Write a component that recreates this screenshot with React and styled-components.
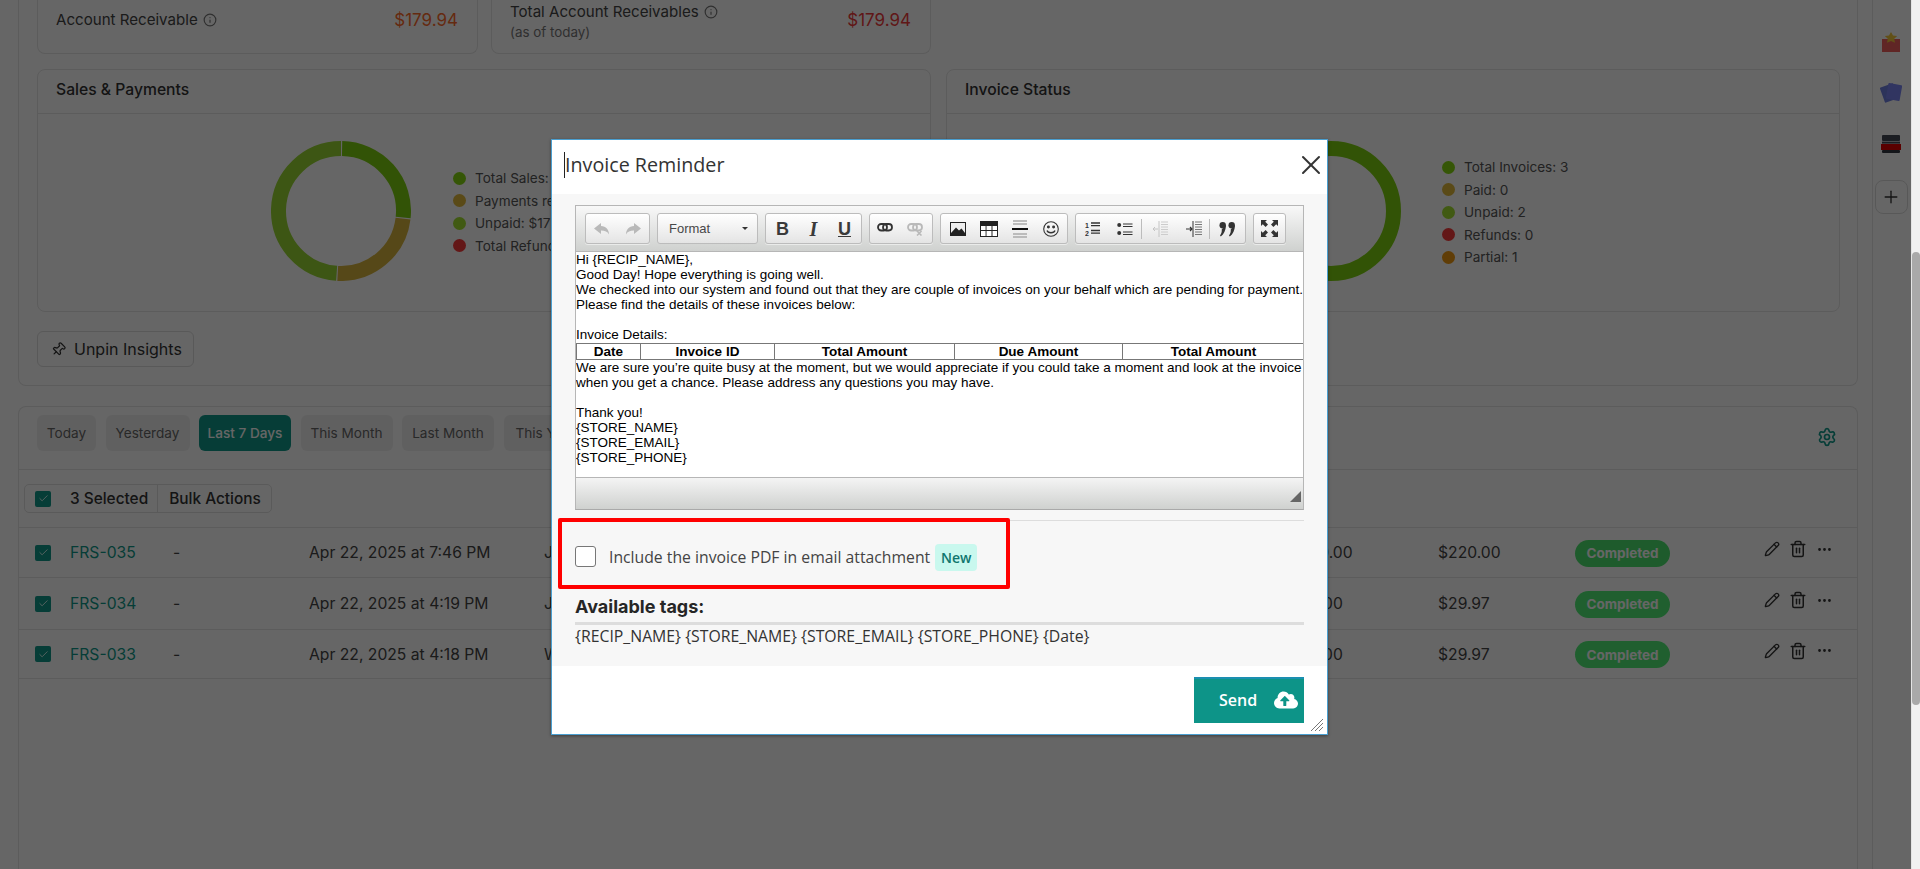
import React from "react";
import styled, { createGlobalStyle } from "styled-components";
import { Info, Pin, Settings, Pencil, Trash2, Ellipsis, Check, Plus, X } from "lucide-react";
import { FaCloudUploadAlt } from "react-icons/fa";

const Global = createGlobalStyle`
  html, body { margin: 0; padding: 0; height: 100%; overflow: hidden; background: #fff; }
  body { font-family: Inter, "Liberation Sans", sans-serif; color: #333; }
  * { box-sizing: border-box; }
`;

const Shell = styled.div`display: flex; width: 1920px; height: 869px;`;
const Main = styled.div`position: relative; flex: 1; display: flex; overflow: hidden; min-width: 0;`;
const Content = styled.div`width: 1872px; padding: 0 14px 0 18px; flex-shrink: 0;`;
const Rail = styled.aside`
  flex: 1; border-left: 1px solid #e6e6e6; display: flex; flex-direction: column; align-items: center;
  padding-top: 32px; padding-right: 2px;
`;
const RailIcon = styled.div`height: ${p => p.$h}px; display: flex; align-items: flex-start; justify-content: center;`;
const RailAdd = styled.div`
  width: 33px; height: 34px; border: 1px solid #ddd; border-radius: 8px; display: flex; align-items: center;
  justify-content: center; color: #333;
`;
const Scrollbar = styled.div`width: 9px; background: #f1f1f1; border-left: 1px solid #e4e4e4; padding-top: 252px;`;
const ScrollThumb = styled.div`height: 453px; background: #a9a9a9; border-radius: 5px;`;

const Insights = styled.section`
  border: 1px solid #e6e6e6; border-top: none; border-radius: 0 0 8px 8px; padding: 0 17px 18px 18px;
`;
const TopRow = styled.div`display: grid; grid-template-columns: 441px 440px; gap: 13px; margin-bottom: 15px; width: 894px;`;
const Stat = styled.div`
  height: 54px; border: 1px solid #e6e6e6; border-top: none; border-radius: 0 0 8px 8px;
  padding: 0 18px; display: flex; justify-content: space-between; align-items: flex-start;
`;
const StatLabel = styled.div`font-size: 15.1px; line-height: 20px; color: #444; padding-top: ${p => p.$top}px; display: flex; align-items: center; gap: 5px;`;
const StatSub = styled.div`font-size: 13.4px; line-height: 16px; color: #777; margin-top: 2px;`;
const StatValue = styled.div`font-size: 17px; line-height: 20px; color: ${p => p.$color}; padding-top: 10px; padding-right: 1px; font-weight: 400;`;

const Charts = styled.div`display: grid; grid-template-columns: 1fr 1fr; gap: 15px;`;
const ChartCard = styled.div`height: 243px; border: 1px solid #e6e6e6; border-radius: 8px;`;
const ChartHead = styled.div`
  height: 44px; border-bottom: 1px solid #e6e6e6; padding: 0 18px 4px; display: flex; align-items: center;
  font-size: 15.7px; font-weight: 500; color: #333;
`;
const ChartBody = styled.div`
  display: flex; align-items: flex-start; padding-top: 27px; padding-left: ${p => p.$left}px; gap: ${p => p.$gap}px;
`;
const Legend = styled.ul`
  list-style: none; margin: ${p => p.$top}px 0 0; padding: 0; display: flex; flex-direction: column; gap: 6px;
`;
const LegendItem = styled.li`display: flex; align-items: center; gap: 9px; font-size: 13.6px; line-height: 16.5px; color: #555;`;
const Dot = styled.span`width: 13px; height: 13px; border-radius: 50%; background: ${p => p.$c};`;
const UnpinButton = styled.button`
  margin-top: 19px; width: 157px; height: 36px; border: 1px solid #dedede; border-radius: 6px; background: transparent;
  display: flex; align-items: center; gap: 8px; padding: 0 0 0 13px; font: 400 16px Inter, sans-serif; color: #333;
`;

const Orders = styled.section`
  margin-top: 20px; border: 1px solid #e6e6e6; border-bottom: none; border-radius: 8px 8px 0 0; height: 465px;
`;
const TabBar = styled.div`
  height: 63px; border-bottom: 1px solid #e6e6e6; padding: 8px 20px 0 18px; display: flex; gap: 9.5px; align-items: flex-start;
`;
const Tab = styled.div`
  height: 36px; width: ${p => p.$w}px; flex-shrink: 0; border-radius: 6px; background: ${p => p.$on ? "#0f9a8a" : "#f1f1f1"};
  color: ${p => p.$on ? "#fff" : "#666"}; font-size: 13.6px; display: flex; align-items: center; justify-content: center;
  font-weight: ${p => p.$on ? 500 : 400};
`;
const Gear = styled.div`margin-left: auto; margin-top: 12px; color: #0f9a8a; display: flex;`;
const BulkRow = styled.div`height: 58px; padding: 14px 0 0 5px; border-bottom: 1px solid #e6e6e6; display: flex; align-items: flex-start;`;
const BulkBox = styled.div`height: 29px; display: flex; align-items: center; border: 1px solid #e2e2e2; border-radius: 5px; padding-left: 10px; font-size: 15.4px; font-weight: 500; color: #333;`;
const Check16 = styled.span`
  width: 16px; height: 16px; border-radius: 2px; background: #0f9a8a; color: #dffaf5; display: inline-flex; align-items: center; justify-content: center;
`;
const BulkText = styled.span`padding-left: 19px; padding-right: 9px; height: 100%; display: flex; align-items: center; border-right: 1px solid #e2e2e2;`;
const BulkAction = styled.span`padding: 0 10px 0 11px;`;
const Row = styled.div`
  height: ${p => p.$h}px; border-bottom: 1px solid #e6e6e6; padding-left: 16px; display: grid;
  grid-template-columns: 35px 103px 136px 235px 746px 148px 137px 189px 1fr; align-items: center; font-size: 15.7px; color: #444;
`;
const OrderId = styled.span`color: #0f9a8a;`;
const Badge = styled.span`
  width: 95px; height: 27px; border-radius: 14px; background: ${p => p.$c}; color: #fff; font-weight: 700; font-size: 13.5px;
  display: flex; align-items: center; justify-content: center; margin-top: 1px;
`;
const Actions = styled.div`display: flex; align-items: center; gap: 9px; color: #333; margin-top: -7px;`;

const Overlay = styled.div`position: absolute; inset: 0; background: rgba(0, 0, 0, 0.6);`;
const Modal = styled.div`
  position: absolute; left: 551px; top: 139px; width: 777px; height: 596px; background: #fff;
  border: 1px solid #4a9fd0; box-shadow: 0 1px 3px rgba(0,0,0,.4); display: flex; flex-direction: column;
`;
const ModalHead = styled.header`
  height: 54px; flex-shrink: 0; padding: 0 0 4px 12px; display: flex; align-items: center; justify-content: space-between;
`;
const ModalTitle = styled.h2`
  margin: 0; font: 400 19.7px/26px "Open Sans", "Noto Sans", sans-serif; color: #333; border-left: 1px solid #222;
`;
const CloseBtn = styled.span`display: flex; color: #333;`;
const ModalBody = styled.div`position: relative; background: #f7f7f7; height: 472px; flex-shrink: 0; padding: 11px 23px 0;`;
const Editor = styled.div`height: 305px; border: 1px solid #b6b6b6; border-bottom-color: #a9a9a9; display: flex; flex-direction: column; background: #fff;`;
const Toolbar = styled.div`
  height: 46px; flex-shrink: 0; background: linear-gradient(#f8f8f8, #cfd1cf); border-bottom: 1px solid #b6b6b6;
  padding: 7px 0 0 9px; display: flex; gap: 7px; align-items: flex-start;
`;
const ToolGroup = styled.div`
  height: 31px; border: 1px solid #bcbcbc; border-radius: 3px; background: linear-gradient(#fff, #e4e4e4);
  display: flex; align-items: center; padding: 0 1px; box-shadow: 0 1px 0 rgba(255,255,255,.5);
`;
const ToolBtn = styled.span`
  width: ${p => p.$w}px; height: 100%; display: flex; align-items: center; justify-content: center;
  color: ${p => p.$off ? "#b9b9b9" : "#333"}; flex-shrink: 0;
`;
const Letter = styled.span`
  font-family: ${p => p.$i ? '"Liberation Serif", serif' : '"Liberation Sans", sans-serif'};
  font-style: ${p => p.$i ? "italic" : "normal"}; font-weight: 700; font-size: ${p => p.$i ? 20 : 18}px;
  text-decoration: ${p => p.$u ? "underline" : "none"}; color: #3a3a3a; line-height: 1;
`;
const ToolSep = styled.span`width: 1px; height: 20px; background: #bcbcbc; flex-shrink: 0;`;
const Combo = styled.div`
  width: 101px; height: 31px; border: 1px solid #bcbcbc; border-radius: 3px; background: linear-gradient(#fff, #e4e4e4);
  display: flex; align-items: center; justify-content: space-between; padding: 0 9px 0 11px;
  font: 400 13px "Liberation Sans", sans-serif; color: #484848;
`;
const Caret = styled.span`width: 0; height: 0; border: 3px solid transparent; border-top: 3px solid #333; margin-top: 3px;`;
const Doc = styled.div`
  flex: 1; padding: 0; font: 400 13.5px/15px "Liberation Sans", Arial, sans-serif; color: #000; overflow: hidden;
`;
const DocLine = styled.div`min-height: 15px; white-space: nowrap;`;
const DocTable = styled.table`
  width: 100%; border-collapse: collapse; table-layout: fixed; font: 700 13.5px/14px "Liberation Sans", sans-serif; margin-top: 1px;
  th { border: 1px solid #777; padding: 0; text-align: center; height: 16px; }
`;
const StatusBar = styled.div`
  height: 32px; flex-shrink: 0; background: linear-gradient(#f4f4f4, #cfd1cf); border-top: 1px solid #b6b6b6; position: relative;
`;
const Grip = styled.span`
  position: absolute; right: 2px; bottom: 7px; width: 0; height: 0; border-left: 11px solid transparent; border-bottom: 11px solid #666;
`;
const Divider = styled.hr`margin: 10px 0 0; border: 0; border-top: 1px solid #ddd;`;
const CheckRow = styled.label`display: flex; align-items: center; margin-top: 23px; height: 27px; font: 400 15.75px "Open Sans", "Noto Sans", sans-serif; color: #444;`;
const CheckText = styled.span`margin-top: -2px;`;
const EmptyCheck = styled.span`width: 21px; height: 21px; border: 1px solid #777; border-radius: 3px; background: #fff; margin-right: 13px; margin-top: -2px;`;
const NewTag = styled.span`
  margin-left: 5px; height: 27px; width: 42px; border-radius: 4px; background: #c9f8ee; color: #0f766e; font-size: 14px; font-weight: 600;
  display: flex; align-items: center; justify-content: center;
`;
const TagsTitle = styled.h3`margin: 24px 0 0; padding-top: 1px; font: 700 18px/22px Inter, sans-serif; color: #262626;`;
const TagsRule = styled.div`height: 3px; background: #ddd; margin-top: 4px;`;
const TagsText = styled.div`font: 400 15.8px/22px "Open Sans", "Noto Sans", sans-serif; color: #333;`;
const Highlight = styled.div`
  position: absolute; left: 6px; top: 324px; width: 452px; height: 71px; border: 4px solid #f00; border-radius: 2px; pointer-events: none;
`;
const ModalFoot = styled.footer`flex: 1; padding: 11px 23px 0; display: flex; justify-content: flex-end; position: relative;`;
const SendBtn = styled.button`
  width: 110px; height: 46px; background: #0d9488; border: 0; border-top: 2px solid #1b8fb0; color: #fff; font: 600 16px "Open Sans", sans-serif;
  display: flex; align-items: center; padding: 0 0 2px 25px; gap: 17px;
`;
const Resize = styled.svg`position: absolute; right: 3px; bottom: 2px;`;

/* ---------- drawings ---------- */
const polar = (r, a) => {
  const t = (a - 90) * Math.PI / 180;
  return [70 + r * Math.cos(t), 70 + r * Math.sin(t)];
};
const arc = (a, b) => {
  const [x1, y1] = polar(62.5, a), [x2, y2] = polar(62.5, b);
  return `M${x1} ${y1}A62.5 62.5 0 ${b - a > 180 ? 1 : 0} 1 ${x2} ${y2}`;
};
const Donut = ({ segs }) => (
  <svg width="140" height="140" viewBox="0 0 140 140" fill="none">
    {segs.map(([a, b, c]) => b - a >= 360
      ? <circle key={c} cx="70" cy="70" r="62.5" stroke={c} strokeWidth="15" />
      : <path key={c} d={arc(a, b)} stroke={c} strokeWidth="15" />)}
  </svg>
);

const Undo = ({ flip }) => (
  <svg width="18" height="16" viewBox="0 0 18 16" fill="currentColor" style={flip ? { transform: "scaleX(-1)" } : undefined}>
    <path d="M8 2 1 7.5 8 13V9.5c4 0 6.5 1 8 4 0-5-3-8-8-8.5z" />
  </svg>
);
const LinkIcon = ({ off }) => (
  <svg width="16" height="14" viewBox="0 0 16 14" fill="none" stroke="currentColor" strokeWidth="1.8">
    <rect x="1" y="2" width="9" height="6.5" rx="3.2" />
    <rect x="6" y="2" width="9" height="6.5" rx="3.2" />
    {off && <path d="M10 9l4.5 4.5m0-4.5L10 13.5" strokeWidth="1.6" />}
  </svg>
);
const ImageIcon = () => (
  <svg width="16" height="14" viewBox="0 0 16 14"><rect width="16" height="14" fill="#222" /><rect x="1" y="1" width="14" height="10" fill="#eee" /><path d="M1 11 6 5.5l3 3 2.5-2L15 11v2H1z" fill="#222" /></svg>
);
const TableIcon = () => (
  <svg width="18" height="16" viewBox="0 0 18 16"><rect width="18" height="16" fill="#222" /><path d="M1 5h4.6v4H1zM6.5 5h5v4h-5zM12.5 5H17v4h-4.5zM1 10h4.6v5H1zM6.5 10h5v5h-5zM12.5 10H17v5h-4.5z" fill="#fff" /></svg>
);
const HrIcon = () => (
  <svg width="16" height="18" viewBox="0 0 16 18"><path d="M1 1h14M1 4h14M1 14h14M1 17h14" stroke="#aaa" strokeWidth="1.4" /><path d="M0 9h16" stroke="#111" strokeWidth="2" /></svg>
);
const Smiley = () => (
  <svg width="16" height="16" viewBox="0 0 16 16" fill="none" stroke="#333" strokeWidth="1.1"><circle cx="8" cy="8" r="7.3" /><circle cx="5.4" cy="6" r=".9" fill="#333" /><circle cx="10.6" cy="6" r=".9" fill="#333" /><path d="M4 9.5c1 3 7 3 8 0" strokeWidth="1.3" /></svg>
);
const OlIcon = () => (
  <svg width="16" height="15" viewBox="0 0 16 15"><text x="0" y="6.5" fontSize="7" fontWeight="700" fontFamily="Liberation Sans" fill="#333">1</text><text x="0" y="14.5" fontSize="7" fontWeight="700" fontFamily="Liberation Sans" fill="#333">2</text><path d="M6 2h9M6 4.6h9M6 9.5h9M6 12.2h9" stroke="#333" strokeWidth="1.3" /></svg>
);
const UlIcon = () => (
  <svg width="16" height="14" viewBox="0 0 16 14"><circle cx="2.2" cy="3" r="2" fill="#333" /><circle cx="2.2" cy="11" r="2" fill="#333" /><path d="M6 2h9.5M6 4.5h9.5M6 10h9.5M6 12.5h9.5" stroke="#333" strokeWidth="1.2" /></svg>
);
const IndentIcon = ({ out }) => (
  <svg width="16" height="16" viewBox="0 0 16 16" fill="none" stroke={out ? "#c4c4c4" : "#333"} strokeWidth="1">
    <path d="M9 1h7M9 3.5h7M9 6h7M9 8.5h7M9 11h7M9 13.5h7" stroke={out ? "#ccc" : "#777"} />
    <path d="M7 0v16" />
    {out ? <path d="M6 8H1m2-2-2 2 2 2" /> : <path d="M0 8h5.5M4 6l2 2-2 2" strokeWidth="1.2" />}
  </svg>
);
const QuoteIcon = () => (
  <svg width="17" height="16" viewBox="0 0 17 16" fill="#333"><circle cx="3.7" cy="4.2" r="3.2" /><path d="M6.9 4.2C6.9 9 5 13 1.8 15.5L1 14.6c1.5-2 2-4 1.7-6z" /><circle cx="12.7" cy="4.2" r="3.2" /><path d="M15.9 4.2c0 4.8-1.9 8.8-5.1 11.3l-.8-.9c1.5-2 2-4 1.7-6z" /></svg>
);
const MaxIcon = () => (
  <svg width="17" height="17" viewBox="0 0 17 17" fill="#333">
    <path d="M0 0h6L4.2 1.8 7 4.6 4.6 7 1.8 4.2 0 6zM17 0v6l-1.8-1.8L12.4 7 10 4.6l2.8-2.8L11 0zM0 17v-6l1.8 1.8L4.6 10 7 12.4l-2.8 2.8L6 17zM17 17h-6l1.8-1.8L10 12.4l2.4-2.4 2.8 2.8L17 11z" />
  </svg>
);
const GiftIcon = () => (
  <svg width="20" height="20" viewBox="0 0 20 20"><rect x="1" y="7" width="18" height="13" fill="#f0605e" /><path d="M10 0l2 3.6 4.2.5-3 2.7.8 4L10 8.9l-4 1.9.8-4-3-2.7 4.2-.5z" fill="#f5c93b" /></svg>
);
const CardsIcon = () => (
  <svg width="22" height="21" viewBox="0 0 22 21"><rect x="2" y="3" width="14" height="16" rx="1" fill="#6f7fe0" transform="rotate(-20 9 11)" /><rect x="7" y="2" width="14" height="16" rx="1" fill="#7a86f2" transform="rotate(10 14 10)" /></svg>
);
const StackIcon = () => (
  <svg width="20" height="18" viewBox="0 0 20 18"><rect x="1" y="0" width="18" height="6" rx="1" fill="#444a55" /><rect x="1" y="6.6" width="18" height="2" fill="#444a55" /><rect y="9" width="20" height="6" fill="#e00000" /><rect x="1" y="15" width="18" height="3" rx="1" fill="#333842" /></svg>
);

const orderRows = [
  { id: "FRS-035", date: "Apr 22, 2025 at 7:46 PM", name: "J", paid: "$220.00", total: "$220.00", h: 50, c: "#4de46e" },
  { id: "FRS-034", date: "Apr 22, 2025 at 4:19 PM", name: "J", paid: "$29.00", total: "$29.97", h: 52, c: "#50ee76" },
  { id: "FRS-033", date: "Apr 22, 2025 at 4:18 PM", name: "W", paid: "$29.00", total: "$29.97", h: 49, c: "#50ee76" },
];
const tabs = [["Today", 59], ["Yesterday", 84], ["Last 7 Days", 92], ["This Month", 92], ["Last Month", 92], ["This Year", 84]];
const green = "#86d810", gold = "#e0b83a", lime = "#a4e030", red = "#f83a3a", orange = "#f09a10";

const EDITOR_LINES = [
  "Hi {RECIP_NAME},",
  "Good Day! Hope everything is going well.",
  "We checked into our system and found out that they are couple of invoices on your behalf which are pending for payment.",
  "Please find the details of these invoices below:",
  "",
  "Invoice Details:",
];

export default function App() {
  return (
    <Shell>
      <Global />
      <Main>
        <Content>
          <Insights>
            <TopRow>
              <Stat>
                <StatLabel $top={10}>Account Receivable <Info size={14} color="#777" /></StatLabel>
                <StatValue $color="#fd6a2a">$179.94</StatValue>
              </Stat>
              <Stat>
                <div>
                  <StatLabel $top={2}>Total Account Receivables <Info size={14} color="#777" /></StatLabel>
                  <StatSub>(as of today)</StatSub>
                </div>
                <StatValue $color="#f03a3a">$179.94</StatValue>
              </Stat>
            </TopRow>
            <Charts>
              <ChartCard>
                <ChartHead>Sales &amp; Payments</ChartHead>
                <ChartBody $left={233} $gap={42}>
                  <Donut segs={[[1, 96, "#7ed010"], [97, 183, "#d8b43c"], [184, 360, "#98d832"]]} />
                  <Legend $top={29}>
                    <LegendItem><Dot $c={green} />Total Sales:</LegendItem>
                    <LegendItem><Dot $c={gold} />Payments received: $0.00</LegendItem>
                    <LegendItem><Dot $c={lime} />Unpaid: $179.94</LegendItem>
                    <LegendItem><Dot $c={red} />Total Refunds: $0.00</LegendItem>
                  </Legend>
                </ChartBody>
              </ChartCard>
              <ChartCard>
                <ChartHead>Invoice Status</ChartHead>
                <ChartBody $left={314} $gap={41}>
                  <Donut segs={[[0, 360, "#7ed010"]]} />
                  <Legend $top={18}>
                    <LegendItem><Dot $c={green} />Total Invoices: 3</LegendItem>
                    <LegendItem><Dot $c={gold} />Paid: 0</LegendItem>
                    <LegendItem><Dot $c={lime} />Unpaid: 2</LegendItem>
                    <LegendItem><Dot $c={red} />Refunds: 0</LegendItem>
                    <LegendItem><Dot $c={orange} />Partial: 1</LegendItem>
                  </Legend>
                </ChartBody>
              </ChartCard>
            </Charts>
            <UnpinButton><Pin size={15} style={{ transform: "rotate(45deg)" }} />Unpin Insights</UnpinButton>
          </Insights>
          <Orders>
            <TabBar>
              {tabs.map(([t, w]) => <Tab key={t} $w={w} $on={t === "Last 7 Days"}>{t}</Tab>)}
              <Gear><Settings size={20} /></Gear>
            </TabBar>
            <BulkRow>
              <BulkBox>
                <Check16><Check size={11} /></Check16>
                <BulkText>3 Selected</BulkText>
                <BulkAction>Bulk Actions</BulkAction>
              </BulkBox>
            </BulkRow>
            {orderRows.map(r => (
              <Row key={r.id} $h={r.h}>
                <Check16><Check size={11} /></Check16>
                <OrderId>{r.id}</OrderId>
                <span>-</span>
                <span>{r.date}</span>
                <span>{r.name}</span>
                <span>{r.paid}</span>
                <span>{r.total}</span>
                <Badge $c={r.c}>Completed</Badge>
                <Actions>
                  <Pencil size={16} />
                  <Trash2 size={18} />
                  <Ellipsis size={17} />
                </Actions>
              </Row>
            ))}
          </Orders>
        </Content>
        <Rail>
          <RailIcon $h={50}><GiftIcon /></RailIcon>
          <RailIcon $h={53}><CardsIcon /></RailIcon>
          <RailIcon $h={45}><StackIcon /></RailIcon>
          <RailAdd><Plus size={20} strokeWidth={1.6} /></RailAdd>
        </Rail>
        <Overlay />
        <Modal>
          <ModalHead>
            <ModalTitle>Invoice Reminder</ModalTitle>
            <CloseBtn><X size={32} strokeWidth={1.5} /></CloseBtn>
          </ModalHead>
          <ModalBody>
            <Editor>
              <Toolbar>
                <ToolGroup>
                  <ToolBtn $w={30.5} $off><Undo /></ToolBtn>
                  <ToolBtn $w={30.5} $off><Undo flip /></ToolBtn>
                </ToolGroup>
                <Combo>Format<Caret /></Combo>
                <ToolGroup>
                  <ToolBtn $w={31}><Letter>B</Letter></ToolBtn>
                  <ToolBtn $w={31}><Letter $i>I</Letter></ToolBtn>
                  <ToolBtn $w={31}><Letter $u>U</Letter></ToolBtn>
                </ToolGroup>
                <ToolGroup>
                  <ToolBtn $w={28}><LinkIcon /></ToolBtn>
                  <ToolBtn $w={32} $off><LinkIcon off /></ToolBtn>
                </ToolGroup>
                <ToolGroup>
                  <ToolBtn $w={31}><ImageIcon /></ToolBtn>
                  <ToolBtn $w={31}><TableIcon /></ToolBtn>
                  <ToolBtn $w={31}><HrIcon /></ToolBtn>
                  <ToolBtn $w={31}><Smiley /></ToolBtn>
                </ToolGroup>
                <ToolGroup>
                  <ToolBtn $w={31}><OlIcon /></ToolBtn>
                  <ToolBtn $w={33}><UlIcon /></ToolBtn>
                  <ToolSep />
                  <ToolBtn $w={36}><IndentIcon out /></ToolBtn>
                  <ToolBtn $w={31}><IndentIcon /></ToolBtn>
                  <ToolSep />
                  <ToolBtn $w={34}><QuoteIcon /></ToolBtn>
                </ToolGroup>
                <ToolGroup><ToolBtn $w={29}><MaxIcon /></ToolBtn></ToolGroup>
              </Toolbar>
              <Doc>
                {EDITOR_LINES.map((l, i) => <DocLine key={i}>{l}</DocLine>)}
                <DocTable>
                  <colgroup><col width="64" /><col width="134" /><col width="180" /><col width="168" /><col width="182" /></colgroup>
                  <thead><tr><th>Date</th><th>Invoice ID</th><th>Total Amount</th><th>Due Amount</th><th>Total Amount</th></tr></thead>
                </DocTable>
                <DocLine>We are sure you’re quite busy at the moment, but we would appreciate if you could take a moment and look at the invoice</DocLine>
                <DocLine>when you get a chance. Please address any questions you may have.</DocLine>
                <DocLine />
                <DocLine>Thank you!</DocLine>
                <DocLine>{"{STORE_NAME}"}</DocLine>
                <DocLine>{"{STORE_EMAIL}"}</DocLine>
                <DocLine>{"{STORE_PHONE}"}</DocLine>
              </Doc>
              <StatusBar><Grip /></StatusBar>
            </Editor>
            <Divider />
            <CheckRow>
              <EmptyCheck />
              <CheckText>Include the invoice PDF in email attachment</CheckText>
              <NewTag>New</NewTag>
            </CheckRow>
            <TagsTitle>Available tags:</TagsTitle>
            <TagsRule />
            <TagsText>{"{RECIP_NAME} {STORE_NAME} {STORE_EMAIL} {STORE_PHONE} {Date}"}</TagsText>
            <Highlight />
          </ModalBody>
          <ModalFoot>
            <SendBtn>Send<FaCloudUploadAlt size={24} /></SendBtn>
            <Resize width="14" height="14" viewBox="0 0 14 14" stroke="#777" strokeWidth="1">
              <path d="M1 13 13 1M5 13l8-8M9 13l4-4" />
            </Resize>
          </ModalFoot>
        </Modal>
      </Main>
      <Scrollbar><ScrollThumb /></Scrollbar>
    </Shell>
  );
}
